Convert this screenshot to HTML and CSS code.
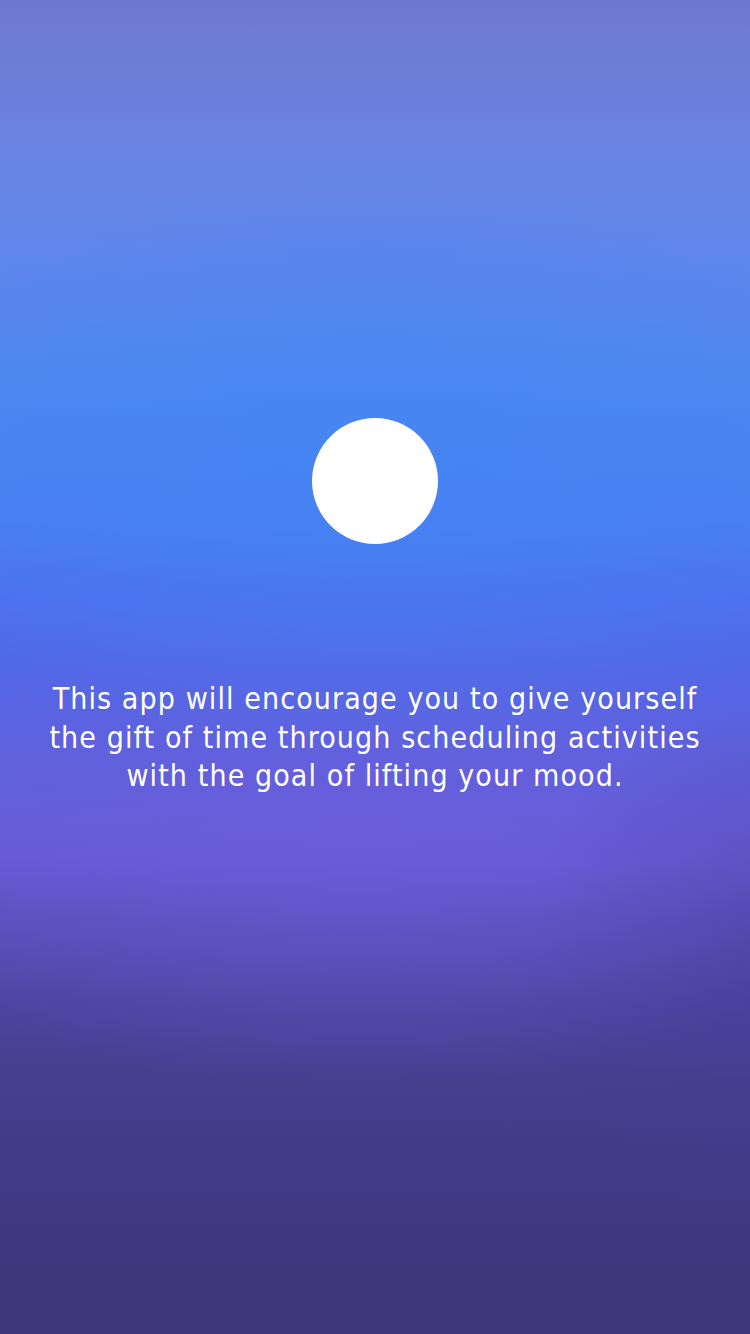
FILE: index.html
```html
<!DOCTYPE html>
<html lang="en">
<head>
<meta charset="utf-8">
<title>Intro</title>
<link rel="stylesheet" href="styles.css">
</head>
<body>
<main class="screen">
  <div class="orb"></div>
  <p class="intro">This app will encourage you to give yourself<br>the gift of time through scheduling activities<br>with the goal of lifting your mood.</p>
</main>
</body>
</html>
```
FILE: styles.css
```css
html, body {
  margin: 0;
  padding: 0;
}
body {
  width: 750px;
  height: 1334px;
  overflow: hidden;
}
.screen {
  width: 750px;
  height: 1334px;
  box-sizing: border-box;
  display: flex;
  flex-direction: column;
  align-items: center;
  padding-top: 418px;
  background:
    radial-gradient(ellipse 520px 300px at 375px 470px, rgba(66,134,245,0.55), rgba(66,134,245,0) 100%),
    radial-gradient(ellipse 520px 240px at 360px 850px, rgba(110,92,220,0.5), rgba(110,92,220,0) 100%),
    radial-gradient(ellipse 260px 260px at 780px 960px, rgba(70,60,150,0.5), rgba(70,60,150,0) 100%),
    linear-gradient(to bottom,
      #6f78cf 0px,
      #6a84e2 150px,
      #5f86ec 260px,
      #4b87f0 400px,
      #4a7ef1 520px,
      #4d6ff0 600px,
      #5466e4 680px,
      #6060dc 780px,
      #665bd5 860px,
      #5a50bb 920px,
      #4c45a0 1000px,
      #453f8e 1080px,
      #413a84 1180px,
      #3e357a 1334px);
}
.orb {
  width: 126px;
  height: 126px;
  border-radius: 50%;
  background: #ffffff;
  flex: none;
}
.intro {
  margin: 136px 0 0;
  color: #ffffff;
  font-family: "DejaVu Sans Condensed", "DejaVu Sans", sans-serif;
  font-stretch: condensed;
  font-size: 30px;
  line-height: 38.5px;
  letter-spacing: 1.1px;
  text-align: center;
  white-space: nowrap;
}
```
